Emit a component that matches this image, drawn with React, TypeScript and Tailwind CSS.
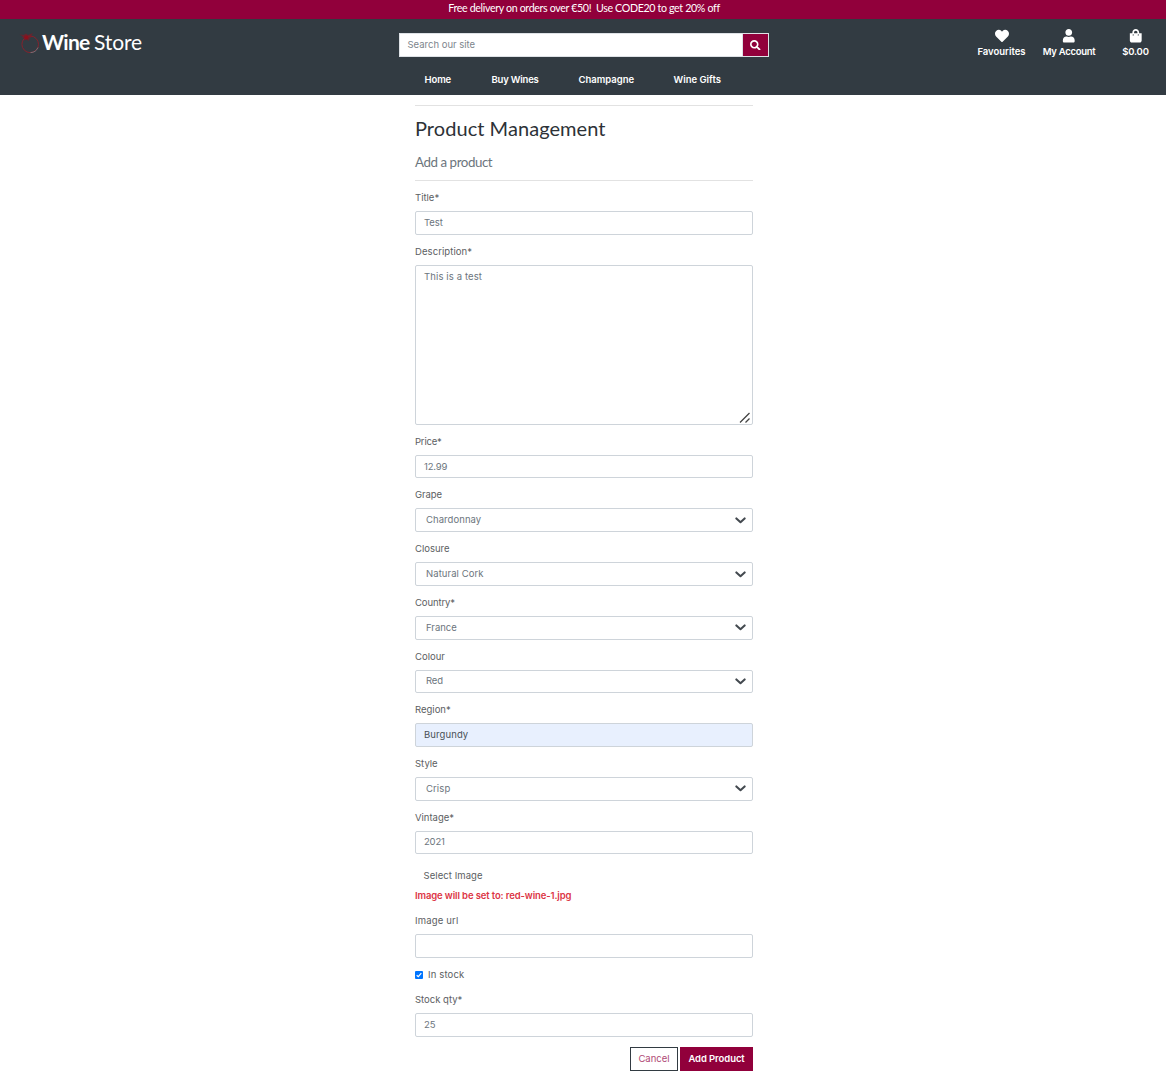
import type { ReactNode } from "react";
import { FaHeart, FaSearch, FaShoppingBag, FaUser } from "react-icons/fa";

function Label({ children, className = "" }: { children: ReactNode; className?: string }) {
  return <label className={`block h-[21px] leading-[16px] text-[#5b5e62] ${className}`}>{children}</label>;
}

const box = "w-full rounded-[2px] border border-[#ced4da] bg-white text-[#6c757d]";

function Field({ label, value, labelClass, valueClass = "" }: { label: string; value: string; labelClass?: string; valueClass?: string }) {
  return (
    <div className="h-[53.7px] shrink-0">
      <Label className={labelClass}>{label}</Label>
      <div className={`${box} flex h-[23.7px] items-center pl-[8px] ${valueClass}`}>{value}</div>
    </div>
  );
}

function Select({ label, value, labelClass, valueClass = "" }: { label: string; value: string; labelClass?: string; valueClass?: string }) {
  return (
    <div className="h-[53.7px] shrink-0">
      <Label className={labelClass}>{label}</Label>
      <div className={`${box} flex h-[23.7px] items-center justify-between pr-[6px] pl-[10px] ${valueClass}`}>
        <span>{value}</span>
        <svg width="11" height="11" viewBox="0 0 16 16" fill="none" stroke="#43494f" strokeWidth="3" strokeLinecap="round" strokeLinejoin="round">
          <path d="M2 5l6 5.5 6-5.5" />
        </svg>
      </div>
    </div>
  );
}

function Logo() {
  return (
    <svg className="mt-[12px] ml-[18px] shrink-0" width="24" height="24" viewBox="0 0 24 24" fill="none">
      <circle cx="12.2" cy="13.3" r="8.3" stroke="#84222d" strokeWidth="1" />
      <path d="M20 16.500a8.300 8.300 0 0 1-7.500 5.100" stroke="#7b7f84" strokeWidth="0.8" />
      <path d="M1.5 3.5l4 .5 2.5-1.5 2 1.5 5-2-2 3 1.5.5-2.5 1.5-1.5 3-2-1.5-2.5 1 .5-2.5-3-.5 1.5-1z" fill="#8a1622" fillOpacity=".6" />
      <circle cx="8.3" cy="6.5" r="2" fill="#8d0f1c" />
    </svg>
  );
}

function Action({ icon, children, className }: { icon: ReactNode; children: ReactNode; className: string }) {
  return (
    <a className={`flex flex-col items-center ${className}`}>
      <span className="flex h-[14px] items-center">{icon}</span>
      <span className="mt-[2px] leading-[14px] whitespace-nowrap">{children}</span>
    </a>
  );
}

export default function App() {
  return (
    <div className="h-[1087px] w-[1166px] overflow-hidden bg-white font-['Inter','Liberation_Sans',sans-serif] text-[9.5px]">
      <div className="h-[19px] bg-[#91003b] pl-[2px] text-center font-['Lato',sans-serif] text-[10.67px] leading-[16px] tracking-[-0.35px] whitespace-pre text-white">
        Free delivery on orders over €50!  Use CODE20 to get 20% off
      </div>

      <header className="flex h-[76px] bg-[#323b42] text-white">
        <div className="flex w-[399px] shrink-0 items-start">
          <Logo />
          <div className="mt-[10px] flex font-['Lato',sans-serif] text-[21px] leading-[26px]">
            <span className="w-[52px] font-bold tracking-[-0.7px]">Wine</span>
            <span className="tracking-[-0.1px]">Store</span>
          </div>
        </div>

        <div className="w-[370px] shrink-0 pt-[14px]">
          <div className="flex h-[24px] border border-[#dee2e6] bg-white">
            <div className="flex-1 pl-[7.5px] leading-[22px] text-[#7d858c]">Search our site</div>
            <div className="flex w-[26px] items-center justify-center border-l border-[#dee2e6] bg-[#91003b]">
              <FaSearch size={10.5} />
            </div>
          </div>
          <nav className="flex gap-[40px] pt-[15px] pl-[25.500px] leading-[16px] font-semibold whitespace-nowrap">
            <span className="w-[27px] tracking-[-0.1px]">Home</span>
            <span className="w-[47px] tracking-[-0.2px]">Buy Wines</span>
            <span className="w-[55px]">Champagne</span>
            <span className="w-[48px]">Wine Gifts</span>
          </nav>
        </div>

        <div className="flex flex-1 justify-end pt-[10px] pr-[17.500px] font-semibold">
          <Action className="w-[48px]" icon={<FaHeart size={14} />}>Favourites</Action>
          <Action className="ml-[17px] w-[53px] tracking-[-0.28px]" icon={<FaUser size={13.5} />}>My Account</Action>
          <Action className="ml-[27px] w-[26px] tracking-[-0.2px]" icon={<FaShoppingBag size={13.5} />}>$0.00</Action>
        </div>
      </header>

      <main className="ml-[415px] flex w-[338px] flex-col pt-[10px]">
        <hr className="border-[#e2e2e2]" />
        <h2 className="mt-[9px] font-['Lato',sans-serif] text-[20px] leading-[26px] tracking-[0.05px] text-[#2d3237]">Product Management</h2>
        <h5 className="mt-[13px] font-['Lato',sans-serif] text-[13.33px] leading-[17px] tracking-[-0.44px] text-[#6c757d]">Add a product</h5>
        <hr className="mt-[9px] border-[#e2e2e2]" />

        <form className="flex flex-col pt-[9px]">
          <Field label="Title*" value="Test" valueClass="tracking-[-0.1px]" />
          <div className="h-[190.1px]">
            <Label className="tracking-[0.08px]">Description*</Label>
            <div className={`${box} relative h-[160px] pt-[3px] pl-[8px] leading-[15px] tracking-[0.12px]`}>
              This is a test
              <svg className="absolute right-[1px] bottom-0" width="12" height="12" viewBox="0 0 12 12" stroke="#444" strokeWidth="1.3">
                <path d="M1 10.5L10.5 1M6.5 10.5L10.5 6.5" />
              </svg>
            </div>
          </div>
          <Field label="Price*" value="12.99" labelClass="tracking-[-0.2px]" valueClass="tracking-[-0.2px]" />
          <Select label="Grape" value="Chardonnay" labelClass="tracking-[-0.08px]" valueClass="tracking-[0.07px]" />
          <Select label="Closure" value="Natural Cork" valueClass="tracking-[0.07px]" />
          <Select label="Country*" value="France" labelClass="tracking-[-0.1px]" />
          <Select label="Colour" value="Red" valueClass="tracking-[-0.1px]" />
          <Field label="Region*" value="Burgundy" valueClass="bg-[#e8f0fe]! text-[#495057] tracking-[0.1px]" />
          <Select label="Style" value="Crisp" valueClass="tracking-[0.1px]" />
          <Field label="Vintage*" value="2021" valueClass="tracking-[-0.2px]" />

          <div className="mt-[5px] pl-[8.5px] leading-[16px] tracking-[0.07px] text-[#5b5e62]">Select Image</div>
          <div className="mt-[4px] leading-[16px] font-semibold tracking-[-0.12px] text-[#dc3545]">Image will be set to: red-wine-1.jpg</div>

          <div className="mt-[9px] h-[54px]">
            <Label className="tracking-[0.18px]">Image url</Label>
            <div className={`${box} h-[24px]`} />
          </div>
          <div className="flex h-[16px] items-center text-[#5b5e62]">
            <span className="flex size-[8px] items-center justify-center rounded-[1px] bg-[#0075ff]">
              <svg width="6" height="6" viewBox="0 0 6 6" fill="none" stroke="#fff" strokeWidth="1.2">
                <path d="M.7 3.2L2.3 4.7L5.3 1.2" />
              </svg>
            </span>
            <span className="ml-[5px] tracking-[0.15px]">In stock</span>
          </div>
          <div className="mt-[9px]">
            <Label>Stock qty*</Label>
            <div className={`${box} flex h-[24px] items-center pl-[8px]`}>25</div>
          </div>
          <div className="mt-[10px] flex h-[24px] justify-end gap-[2px]">
            <button type="button" className="w-[48px] border border-[#323b42] leading-[20px] text-[#b04a76]">Cancel</button>
            <button type="button" className="w-[73px] bg-[#91003b] leading-[22px] font-semibold tracking-[-0.08px] whitespace-nowrap text-white">Add Product</button>
          </div>
        </form>
      </main>
    </div>
  );
}
